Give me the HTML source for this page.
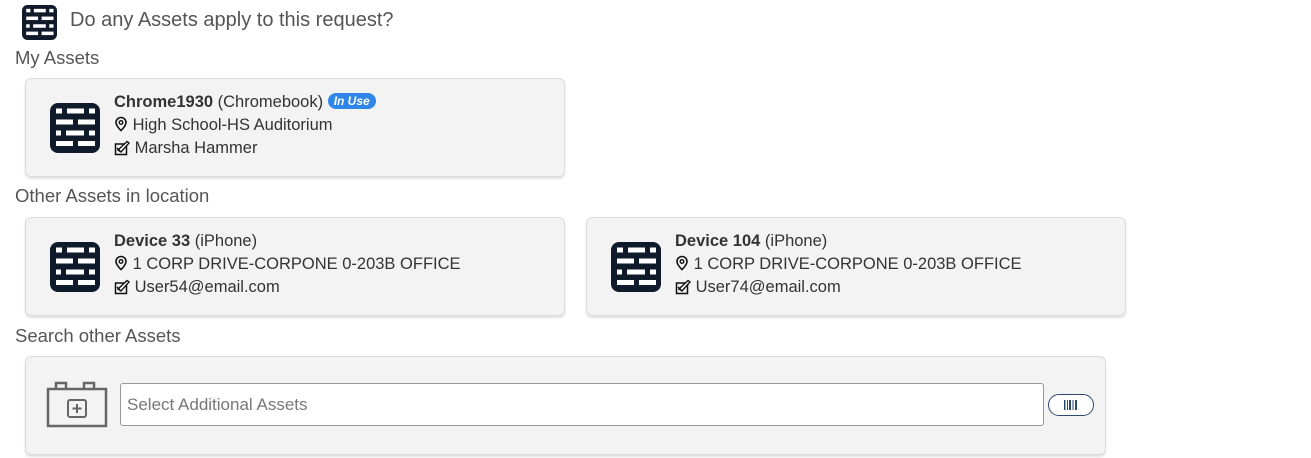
<!DOCTYPE html>
<html><head><style>
body{margin:0;width:1311px;height:458px;background:#fff;font-family:"Liberation Sans",sans-serif;position:relative;overflow:hidden;color:#333}
.a{position:absolute}
.lbl{font-size:18.5px;color:#555;left:15px}
.card{position:absolute;background:#f3f3f3;border:1px solid #dcdcdc;border-radius:6px;box-shadow:0 2px 2px rgba(0,0,0,.12);box-sizing:border-box}
.t{position:absolute;left:88px;font-size:16.5px;color:#333;white-space:nowrap}
.ic{position:absolute;left:24px;top:24px}
.badge{display:inline-block;background:#2f86e8;color:#fff;font-size:12px;font-weight:bold;font-style:italic;border-radius:9px;padding:1px 6px;vertical-align:2px}
</style></head><body>
<svg width="0" height="0" style="position:absolute"><defs>
<symbol id="brick" viewBox="0 0 50 50"><rect width="50" height="50" rx="8" fill="#0f1a2a"/><g fill="#fff">
<rect x="6" y="5.5" width="6" height="5"/><rect x="17" y="5.5" width="17" height="5"/><rect x="39" y="5.5" width="6" height="5"/>
<rect x="6" y="16.5" width="17" height="5"/><rect x="28" y="16.5" width="17" height="5"/>
<rect x="6" y="27.5" width="5" height="5"/><rect x="16" y="27.5" width="18" height="5"/><rect x="39" y="27.5" width="6" height="5"/>
<rect x="6" y="38" width="17" height="5"/><rect x="28" y="38" width="17" height="5"/></g></symbol>
<symbol id="pin" viewBox="0 0 14 16"><path d="M7 1.5a5 5 0 0 1 5 5c0 3.5-5 8-5 8s-5-4.5-5-8a5 5 0 0 1 5-5z" fill="none" stroke="#111" stroke-width="1.6"/><circle cx="7" cy="6.5" r="1.8" fill="none" stroke="#111" stroke-width="1.4"/></symbol>
<symbol id="edit" viewBox="0 0 16 16"><rect x="1.5" y="4" width="11" height="10.5" fill="none" stroke="#111" stroke-width="1.5"/><path d="M4 10l3 2 8-9-2-1.5z" fill="#fff" stroke="#111" stroke-width="1.4"/><path d="M3 8l3 3" stroke="#111" stroke-width="1.5"/></symbol>
</defs></svg>

<svg class="a" style="left:22px;top:5px" width="35" height="35"><use href="#brick"/></svg>
<div class="a" style="left:70px;top:9px;font-size:20px;color:#555">Do any Assets apply to this request?</div>

<div class="a lbl" style="top:47px">My Assets</div>
<div class="card" style="left:25px;top:78px;width:540px;height:99px">
<svg class="ic" width="50" height="50"><use href="#brick"/></svg>
<div class="t" style="top:14px"><b>Chrome1930</b> (Chromebook) <span class="badge">In Use</span></div>
<div class="t" style="top:37px"><svg width="14" height="16" style="vertical-align:-2px"><use href="#pin"/></svg> High School-HS Auditorium</div>
<div class="t" style="top:60px"><svg width="16" height="16" style="vertical-align:-3px"><use href="#edit"/></svg> Marsha Hammer</div>
</div>

<div class="a lbl" style="top:185px">Other Assets in location</div>
<div class="card" style="left:25px;top:217px;width:540px;height:99px">
<svg class="ic" width="50" height="50"><use href="#brick"/></svg>
<div class="t" style="top:14px"><b>Device 33</b> (iPhone)</div>
<div class="t" style="top:37px"><svg width="14" height="16" style="vertical-align:-2px"><use href="#pin"/></svg> 1 CORP DRIVE-CORPONE 0-203B OFFICE</div>
<div class="t" style="top:60px"><svg width="16" height="16" style="vertical-align:-3px"><use href="#edit"/></svg> User54@email.com</div>
</div>
<div class="card" style="left:586px;top:217px;width:540px;height:99px">
<svg class="ic" width="50" height="50"><use href="#brick"/></svg>
<div class="t" style="top:14px"><b>Device 104</b> (iPhone)</div>
<div class="t" style="top:37px"><svg width="14" height="16" style="vertical-align:-2px"><use href="#pin"/></svg> 1 CORP DRIVE-CORPONE 0-203B OFFICE</div>
<div class="t" style="top:60px"><svg width="16" height="16" style="vertical-align:-3px"><use href="#edit"/></svg> User74@email.com</div>
</div>

<div class="a lbl" style="top:325px">Search other Assets</div>
<div class="card" style="left:25px;top:356px;width:1081px;height:99px">
<svg class="a" style="left:20px;top:22px" width="62" height="50" viewBox="0 0 62 50"><g fill="none" stroke="#666" stroke-width="2.5"><path d="M10 10V4h10v6M38 10V4h10v6"/><rect x="2" y="10" width="58" height="37"/><rect x="22" y="21" width="18" height="17" rx="2" stroke-width="2"/><path d="M31 25v9M26.5 29.5h9" stroke-width="2"/></g></svg>
<div class="a" style="left:94px;top:26px;width:924px;height:43px;background:#fff;border:1px solid #999;border-radius:3px;box-sizing:border-box;font-size:17px;color:#777;padding:11px 6px">Select Additional Assets</div>
<div class="a" style="left:1022px;top:37px;width:46px;height:22px;border:1.5px solid #2c4a6e;border-radius:12px;box-sizing:border-box;background:#fff">
<svg class="a" style="left:15px;top:5px" width="14" height="10"><g fill="#2c4a6e"><rect x="0" width="1.5" height="10"/><rect x="3" width="1" height="10"/><rect x="5" width="2" height="10"/><rect x="8.5" width="1" height="10"/><rect x="11" width="2" height="10"/></g></svg></div>
</div>
</body></html>
